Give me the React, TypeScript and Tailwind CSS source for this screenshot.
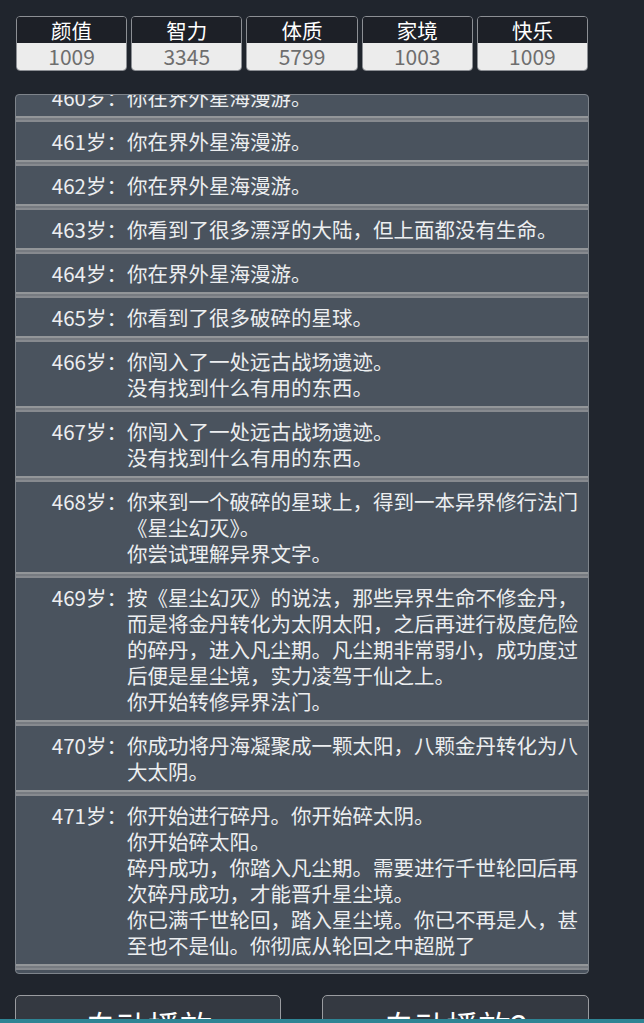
import React from 'react';

type Stat = { label: string; value: number };

const stats: Stat[] = [
  { label: '颜值', value: 1009 },
  { label: '智力', value: 3345 },
  { label: '体质', value: 5799 },
  { label: '家境', value: 1003 },
  { label: '快乐', value: 1009 },
];

type LogEntry = { age: number; text: string };

const logs: LogEntry[] = [
  { age: 460, text: '你在界外星海漫游。' },
  { age: 461, text: '你在界外星海漫游。' },
  { age: 462, text: '你在界外星海漫游。' },
  { age: 463, text: '你看到了很多漂浮的大陆，但上面都没有生命。' },
  { age: 464, text: '你在界外星海漫游。' },
  { age: 465, text: '你看到了很多破碎的星球。' },
  { age: 466, text: '你闯入了一处远古战场遗迹。\n没有找到什么有用的东西。' },
  { age: 467, text: '你闯入了一处远古战场遗迹。\n没有找到什么有用的东西。' },
  { age: 468, text: '你来到一个破碎的星球上，得到一本异界修行法门《星尘幻灭》。\n你尝试理解异界文字。' },
  {
    age: 469,
    text: '按《星尘幻灭》的说法，那些异界生命不修金丹，而是将金丹转化为太阴太阳，之后再进行极度危险的碎丹，进入凡尘期。凡尘期非常弱小，成功度过后便是星尘境，实力凌驾于仙之上。\n你开始转修异界法门。',
  },
  { age: 470, text: '你成功将丹海凝聚成一颗太阳，八颗金丹转化为八大太阴。' },
  {
    age: 471,
    text: '你开始进行碎丹。你开始碎太阴。\n你开始碎太阳。\n碎丹成功，你踏入凡尘期。需要进行千世轮回后再次碎丹成功，才能晋升星尘境。\n你已满千世轮回，踏入星尘境。你已不再是人，甚至也不是仙。你彻底从轮回之中超脱了',
  },
];

function StatCard({ label, value }: Stat) {
  return (
    <div className="rounded-[4px] border border-[#8c8f94] overflow-hidden flex flex-col">
      <div className="h-[26px] pt-[1px] bg-[#1d2027] text-white text-[20.5px] leading-[25px] text-center">{label}</div>
      <div className="h-[27px] bg-[#ececec] text-[#6e6e6e] text-[21px] leading-[27px] text-center">{value}</div>
    </div>
  );
}

function LogRow({ age, text }: LogEntry) {
  return (
    <div>
      <div className="flex py-[6px] text-[20.5px] leading-[26px] text-[#eceef0]">
        <div className="w-[111px] shrink-0 text-right">{age}岁：</div>
        <div className="w-[456px] whitespace-pre-line">{text}</div>
      </div>
      <div className="h-[6px] bg-[#777b81] border-y-2 border-t-[#939699] border-b-[#878a8f]" />
    </div>
  );
}

export default function App() {
  return (
    <div className="h-[1023px] overflow-hidden bg-[#20252d] flex flex-col font-['Noto_Sans_CJK_SC','Noto_Sans',sans-serif]">
      <div className="flex-1 min-h-0 overflow-hidden">
        <div className="w-[574px] ml-[15px] pt-4">
          <div className="ml-[1px] w-[572px] grid grid-cols-5 gap-[4px]">
            {stats.map((s) => (
              <StatCard key={s.label} {...s} />
            ))}
          </div>

          <div className="mt-[23px] h-[880px] rounded-[4px] border border-[#7e848b] bg-[#4a535e] overflow-hidden">
            <div className="mt-[-17px]">
              {logs.map((l) => (
                <LogRow key={l.age} {...l} />
              ))}
            </div>
          </div>

          <div className="mt-[21px] flex justify-between">
            <button className="w-[266px] h-[60px] rounded-[5px] border border-[#9a9ca0] bg-[#343941] text-white text-[32px]">
              自动播放
            </button>
            <button className="w-[267px] h-[60px] rounded-[5px] border border-[#9a9ca0] bg-[#343941] text-white text-[32px]">
              自动播放2
            </button>
          </div>
        </div>
      </div>
      <div className="h-[4px] bg-[#2e8494]" />
    </div>
  );
}
